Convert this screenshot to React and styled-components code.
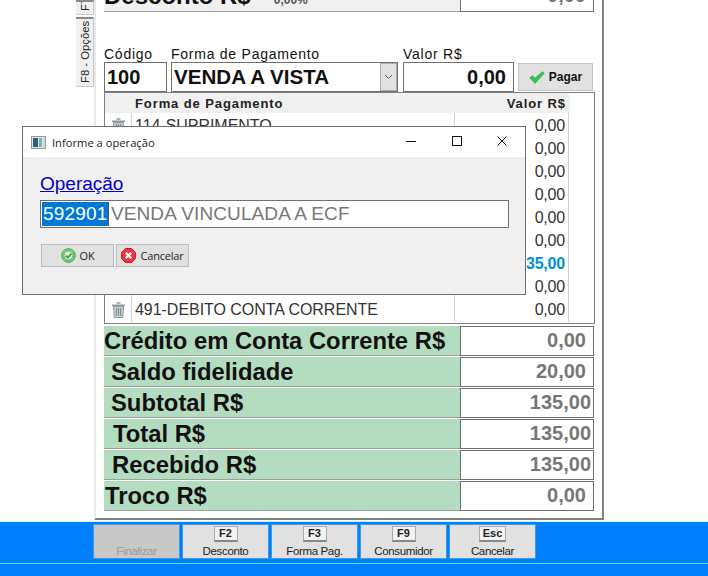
import React from "react";
import styled, { createGlobalStyle } from "styled-components";

const Global = createGlobalStyle`
  html, body { margin: 0; padding: 0; background: #fff; }
  * { box-sizing: border-box; }
`;

const Page = styled.div`
  width: 708px;
  height: 576px;
  position: relative;
  overflow: hidden;
  display: flex;
  flex-direction: column;
  background: #fff;
  font-family: "Liberation Sans", Arial, sans-serif;
`;

const Main = styled.div`
  height: 521px;
  display: flex;
  padding-left: 76px;
`;

const TabColumn = styled.div`
  width: 18px;
  display: flex;
  flex-direction: column;
  flex-shrink: 0;
`;

const SideTab = styled.div`
  width: 18px;
  height: ${(p) => p.$h}px;
  margin-bottom: ${(p) => p.$gap || 0}px;
  background: #f0f0f0;
  border: 1px solid #c8c8c8;
  border-right: none;
  border-bottom: 2px solid #8a8a8a;
  writing-mode: vertical-rl;
  transform: rotate(180deg);
  font-size: 11.3px;
  line-height: 16px;
  color: #222;
  display: flex;
  align-items: center;
  justify-content: flex-start;
  padding-top: ${(p) => p.$pad}px;
  white-space: nowrap;
  overflow: hidden;
`;

const Panel = styled.div`
  width: 510px;
  height: 520px;
  border-left: 2px solid #e8e8e8;
  border-right: 2px solid #808080;
  border-bottom: 2px solid #808080;
  padding-left: 8px;
  display: flex;
  flex-direction: column;
`;

const DiscountRow = styled.div`
  height: 12px;
  width: 490px;
  display: flex;
  flex-shrink: 0;
`;

const DiscountLabel = styled.div`
  width: 356px;
  height: 12px;
  background: #f0f0f0;
  border-bottom: 1px solid #a0a0a0;
  display: flex;
  align-items: flex-start;
  overflow: hidden;
  gap: 23px;
`;

const DiscountName = styled.span`
  font-size: 24px;
  font-weight: bold;
  line-height: 26px;
  color: #111;
  margin-top: -17px;
  white-space: nowrap;
`;

const DiscountPct = styled.span`
  font-size: 12px;
  font-weight: bold;
  color: #555;
  line-height: 14px;
  margin-top: -7px;
`;

const ValueBox = styled.div`
  width: 134px;
  height: ${(p) => p.$h || 30}px;
  background: #fff;
  border: 1px solid #707070;
  border-top: ${(p) => (p.$open ? "none" : "1px solid #707070")};
  display: flex;
  align-items: ${(p) => (p.$open ? "flex-end" : "center")};
  justify-content: flex-end;
  padding-right: ${(p) => p.$pad || 7}px;
  padding-bottom: ${(p) => (p.$open ? 4 : 2)}px;
  font-size: 20px;
  font-weight: bold;
  color: #777;
  overflow: hidden;
`;

const Labels = styled.div`
  display: flex;
  margin-top: 35px;
  height: 15px;
  font-size: 14px;
  line-height: 15px;
  letter-spacing: 0.75px;
  color: #111;
`;

const FieldLabel = styled.span`
  width: ${(p) => p.$w}px;
`;

const EntryRow = styled.div`
  display: flex;
  height: 30px;
`;

const EntryInput = styled.div`
  width: ${(p) => p.$w}px;
  margin-right: ${(p) => p.$mr || 0}px;
  height: 30px;
  border: 1px solid #707070;
  background: #fff;
  display: flex;
  align-items: center;
  justify-content: ${(p) => (p.$right ? "flex-end" : "flex-start")};
  padding: ${(p) => (p.$right ? "0 7px 0 0" : "0 0 0 2px")};
  font-size: ${(p) => p.$size || 20}px;
  font-weight: bold;
  color: #111;
  position: relative;
`;

const SelectArrow = styled.div`
  position: absolute;
  right: 0;
  top: 0;
  width: 17px;
  height: 28px;
  background: #e1e1e1;
  border: 1px solid #adadad;
  display: flex;
  align-items: center;
  justify-content: center;
`;

const PayButton = styled.button`
  width: 75px;
  height: 28px;
  margin-top: 1px;
  background: #e1e1e1;
  border: 1px solid #c4c4c4;
  font-family: inherit;
  font-size: 12px;
  font-weight: bold;
  color: #111;
  display: flex;
  align-items: center;
  justify-content: center;
  gap: 4px;
  padding: 0;
`;

const Grid = styled.div`
  width: 491px;
  height: 232px;
  border: 1px solid #808080;
  display: flex;
  flex-direction: column;
`;

const GridHead = styled.div`
  height: 20px;
  width: 465px;
  background: #f0f0f0;
  display: flex;
  align-items: center;
  justify-content: space-between;
  padding: 0 4px 0 30px;
  font-size: 13px;
  font-weight: bold;
  letter-spacing: 0.9px;
  color: #222;
`;

const GridRow = styled.div`
  height: 23px;
  width: 464px;
  display: grid;
  grid-template-columns: 27px 323px 114px;
  align-items: stretch;
`;

const TrashCell = styled.div`
  display: flex;
  align-items: center;
  justify-content: center;
  border-right: 1px solid #d0d0d0;
`;

const NameCell = styled.div`
  padding: 1px 0 0 3px;
  font-size: 16px;
  letter-spacing: -0.04px;
  line-height: 23px;
  color: #333;
  border-right: 1px solid #d0d0d0;
  white-space: nowrap;
  overflow: hidden;
`;

const AmountCell = styled.div`
  font-size: 16px;
  letter-spacing: -0.2px;
  line-height: 25px;
  text-align: right;
  padding-right: 3px;
  color: ${(p) => (p.$hl ? "#0090d0" : "#333")};
  font-weight: ${(p) => (p.$hl ? "bold" : "normal")};
  border-right: 1px solid #d0d0d0;
`;

const Summary = styled.div`
  margin-top: 2px;
  display: flex;
  flex-direction: column;
`;

const SummaryRow = styled.div`
  display: flex;
  align-items: flex-start;
  height: 31px;
  width: 490px;
`;

const SummaryLabel = styled.div`
  width: 356px;
  height: 30px;
  background: #b4dcc0;
  border-bottom: 1px solid #a0a0a0;
  padding-left: ${(p) => p.$indent}px;
  font-size: 23.8px;
  font-weight: bold;
  line-height: 29px;
  color: #111;
  white-space: nowrap;
`;

const Footer = styled.div`
  height: 55px;
  background: #0080ff;
  border-top: 1px solid #c8f4f4;
  position: relative;
  padding: 2px 0 0 93px;
  display: flex;
  gap: 2px;
`;

const FooterLine = styled.div`
  position: absolute;
  left: 0;
  right: 0;
  top: 41px;
  height: 1px;
  background: #58d8e0;
`;

const FnButton = styled.div`
  width: 87px;
  height: 35px;
  background: ${(p) => (p.$off ? "#c8c8c8" : "#e1e1e1")};
  border: 1px solid #3a9ae8;
  display: flex;
  flex-direction: column;
  align-items: center;
  justify-content: flex-end;
  font-size: 11.5px;
  line-height: 14px;
  letter-spacing: -0.35px;
  color: ${(p) => (p.$off ? "#9a9a9a" : "#222")};
`;

const KeyCap = styled.span`
  min-width: 24px;
  height: 16px;
  margin-bottom: 2px;
  padding: 0 3px;
  background: #f2f2f2;
  border: 1px solid #aaa;
  border-bottom: 2px solid #888;
  font-size: 11px;
  font-weight: bold;
  line-height: 13px;
  text-align: center;
  letter-spacing: 0;
  color: #222;
`;

const Dialog = styled.div`
  position: absolute;
  left: 22px;
  top: 126px;
  width: 504px;
  height: 169px;
  background: #f0f0f0;
  border: 1px solid #707070;
  display: flex;
  flex-direction: column;
`;

const TitleBar = styled.div`
  height: 30px;
  background: #fff;
  display: flex;
  align-items: center;
  padding-left: 8px;
  font-family: "Open Sans", "Noto Sans", sans-serif;
  font-size: 11.2px;
  color: #222;
  gap: 6px;
`;

const TitleText = styled.span`
  flex: 1;
`;

const WindowControls = styled.div`
  display: flex;
  width: 101px;
  margin: 0 18px 2px 0;
  justify-content: space-between;
  align-items: center;
`;

const DialogBody = styled.div`
  padding: 16px 16px 0 17px;
  display: flex;
  flex-direction: column;
`;

const OperationLink = styled.a`
  font-size: 19px;
  line-height: 22px;
  height: 27px;
  color: #0000cc;
  text-decoration: underline;
`;

const OperationInput = styled.div`
  width: 469px;
  height: 28px;
  background: #fff;
  border: 1px solid #707070;
  display: flex;
  align-items: center;
  font-size: 19px;
  letter-spacing: 0.1px;
  color: #777;
  padding-left: 1px;
`;

const CodeSelected = styled.span`
  width: 67px;
  height: 24px;
  line-height: 24px;
  background: #0078d7;
  color: #fff;
  border-right: 1px solid #555;
  padding-left: 1px;
  margin-right: 2px;
  letter-spacing: 0.2px;
`;

const DialogActions = styled.div`
  display: flex;
  gap: 2px;
  margin-top: 16px;
  margin-left: 1px;
`;

const DialogButton = styled.button`
  width: 73px;
  height: 23px;
  background: #e1e1e1;
  border: 1px solid #bcbcbc;
  font-family: "Open Sans", "Noto Sans", sans-serif;
  font-size: 11px;
  letter-spacing: -0.2px;
  color: #222;
  display: flex;
  align-items: center;
  justify-content: center;
  gap: 4px;
  padding: 0;
`;

const Trash = () => (
  <svg width="15" height="16" viewBox="0 0 15 16">
    <path d="M5.5 1h4M1 3.2h13" stroke="#8b979f" strokeWidth="1.5" fill="none" />
    <path d="M2.5 4.5h10l-.8 11H3.3z" fill="#ccd4d9" stroke="#8b979f" />
    <path d="M5.3 6v8M7.5 6v8M9.7 6v8" stroke="#76838b" strokeWidth="1.1" />
  </svg>
);

const Check = () => (
  <svg width="16" height="13" viewBox="0 0 16 13">
    <path d="M.8 6.8l2.6-2 2.6 2.4L13.4.8l1.8 1.4L6 12.4z" fill="#2ec75c" stroke="#1c9a44" strokeWidth=".6" />
  </svg>
);

const ChevronDown = () => (
  <svg width="9" height="6" viewBox="0 0 9 6">
    <path d="M1 1l3.5 3.5L8 1" stroke="#555" fill="none" />
  </svg>
);

const OkIcon = () => (
  <svg width="15" height="15" viewBox="0 0 15 15">
    <circle cx="7.5" cy="7.5" r="6.8" fill="#7fd67f" stroke="#3e9e4a" />
    <circle cx="7.5" cy="7.5" r="4.6" fill="#d8efd8" stroke="#52b05c" />
    <path d="M4.8 7.6l2 2 3.6-4" stroke="#2f9a3e" strokeWidth="1.6" fill="none" />
  </svg>
);

const CancelIcon = () => (
  <svg width="15" height="15" viewBox="0 0 15 15">
    <path d="M4.5.5h6l4 4v6l-4 4h-6l-4-4v-6z" fill="#f0333c" stroke="#c81e28" />
    <path d="M4.8 4.8l5.4 5.4M10.2 4.8l-5.4 5.4" stroke="#fff" strokeWidth="2.2" />
  </svg>
);

const AppIcon = () => (
  <svg width="15" height="13" viewBox="0 0 15 13">
    <rect x=".5" y=".5" width="14" height="12" fill="#dfe8ee" stroke="#8a9aa4" />
    <rect x="2" y="2" width="5" height="9" fill="#2d5f7a" />
    <rect x="8" y="2" width="3" height="9" fill="#7fb4a8" />
    <rect x="12" y="2" width="1.5" height="9" fill="#c8d4dc" />
  </svg>
);

const rows = [
  { name: "114-SUPRIMENTO", value: "0,00" },
  { name: "", value: "0,00" },
  { name: "", value: "0,00" },
  { name: "", value: "0,00" },
  { name: "", value: "0,00" },
  { name: "", value: "0,00" },
  { name: "", value: "135,00", hl: true },
  { name: "", value: "0,00" },
  { name: "491-DEBITO CONTA CORRENTE", value: "0,00" },
];

const summary = [
  { label: "Crédito em Conta Corrente R$", value: "0,00", indent: 0, pad: 7 },
  { label: "Saldo fidelidade", value: "20,00", indent: 7, pad: 7 },
  { label: "Subtotal R$", value: "135,00", indent: 7, pad: 2 },
  { label: "Total R$", value: "135,00", indent: 9, pad: 2 },
  { label: "Recebido R$", value: "135,00", indent: 8, pad: 2 },
  { label: "Troco R$", value: "0,00", indent: 1, pad: 7 },
];

const actions = [
  { key: "", label: "Finalizar", off: true },
  { key: "F2", label: "Desconto" },
  { key: "F3", label: "Forma Pag." },
  { key: "F9", label: "Consumidor" },
  { key: "Esc", label: "Cancelar" },
];

export default function App() {
  return (
    <Page>
      <Global />
      <Main>
        <TabColumn>
          <SideTab $h={15} $gap={2} $pad={3}>F7</SideTab>
          <SideTab $h={70} $pad={3}>F8 - Opções</SideTab>
        </TabColumn>
        <Panel>
          <DiscountRow>
            <DiscountLabel>
              <DiscountName>Desconto R$</DiscountName>
              <DiscountPct>0,00%</DiscountPct>
            </DiscountLabel>
            <ValueBox $h={12} $open>0,00</ValueBox>
          </DiscountRow>
          <Labels>
            <FieldLabel $w={67}>Código</FieldLabel>
            <FieldLabel $w={232}>Forma de Pagamento</FieldLabel>
            <FieldLabel $w={110}>Valor R$</FieldLabel>
          </Labels>
          <EntryRow>
            <EntryInput $w={63} $mr={4}>100</EntryInput>
            <EntryInput $w={227} $mr={5} $size={20.6}>
              VENDA A VISTA
              <SelectArrow><ChevronDown /></SelectArrow>
            </EntryInput>
            <EntryInput $w={111} $mr={4} $right>0,00</EntryInput>
            <PayButton><Check />Pagar</PayButton>
          </EntryRow>
          <Grid>
            <GridHead>
              <span>Forma de Pagamento</span>
              <span>Valor R$</span>
            </GridHead>
            {rows.map((r, i) => (
              <GridRow key={i}>
                <TrashCell><Trash /></TrashCell>
                <NameCell>{r.name}</NameCell>
                <AmountCell $hl={r.hl}>{r.value}</AmountCell>
              </GridRow>
            ))}
          </Grid>
          <Summary>
            {summary.map((s) => (
              <SummaryRow key={s.label}>
                <SummaryLabel $indent={s.indent}>{s.label}</SummaryLabel>
                <ValueBox $pad={s.pad}>{s.value}</ValueBox>
              </SummaryRow>
            ))}
          </Summary>
        </Panel>
      </Main>
      <Footer>
        {actions.map((a) => (
          <FnButton key={a.label} $off={a.off}>
            {a.key && <KeyCap>{a.key}</KeyCap>}
            {a.label}
          </FnButton>
        ))}
        <FooterLine />
      </Footer>
      <Dialog>
        <TitleBar>
          <AppIcon />
          <TitleText>Informe a operação</TitleText>
          <WindowControls>
            <svg width="10" height="10" viewBox="0 0 10 10"><path d="M0 5.5h10" stroke="#111" /></svg>
            <svg width="10" height="10" viewBox="0 0 10 10"><rect x=".5" y=".5" width="9" height="9" fill="none" stroke="#111" /></svg>
            <svg width="10" height="10" viewBox="0 0 10 10"><path d="M.5.5l9 9M9.5.5l-9 9" stroke="#111" /></svg>
          </WindowControls>
        </TitleBar>
        <DialogBody>
          <OperationLink>Operação</OperationLink>
          <OperationInput>
            <CodeSelected>592901</CodeSelected>
            VENDA VINCULADA A ECF
          </OperationInput>
          <DialogActions>
            <DialogButton><OkIcon />OK</DialogButton>
            <DialogButton><CancelIcon />Cancelar</DialogButton>
          </DialogActions>
        </DialogBody>
      </Dialog>
    </Page>
  );
}
